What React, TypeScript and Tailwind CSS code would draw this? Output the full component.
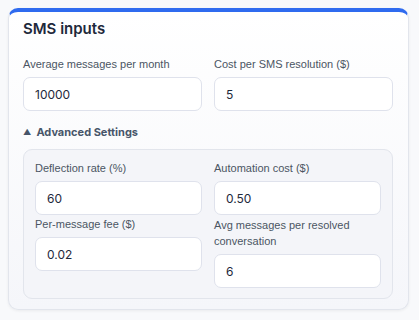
import React from "react";

const labelCls = "block text-[11px] leading-[15px] text-[#4b5563] mb-[5px]";
const inputCls =
  "w-full h-[34px] rounded-[7px] border border-[#dfe2ec] bg-white px-[11px] text-[12px] text-[#1e293b] outline-none";

function Field({ label, value, labelClass = "" }: { label: string; value: string; labelClass?: string }) {
  return (
    <div className="flex flex-col">
      <label className={labelCls + " " + labelClass} style={{ fontFamily: '"Liberation Sans", Arial, sans-serif' }}>
        {label}
      </label>
      <input className={inputCls} defaultValue={value} style={{ fontFamily: "Inter, sans-serif" }} />
    </div>
  );
}

export default function App() {
  return (
    <div className="w-[419px] h-[320px] bg-[#f8f9fb] pt-[8px] pl-[8px]" style={{ fontFamily: "Inter, sans-serif" }}>
      <div className="w-[401px] h-[302px] rounded-[10px] border border-[#e2e5ec] border-t-[4px] border-t-[#2f6bef] bg-gradient-to-b from-white to-[#f5f6fa] shadow-[0_1px_3px_rgba(0,0,0,0.06)] px-[14px] pt-[6px]">
        <h2 className="text-[15px] leading-[22px] font-semibold text-[#1e293b]">SMS inputs</h2>
        <div className="mt-[17px] grid grid-cols-2 gap-x-[12px] pr-[1px]">
          <Field label="Average messages per month" value="10000" />
          <Field label="Cost per SMS resolution ($)" value="5" />
        </div>
        <div className="mt-[13px] flex items-center gap-[5px] text-[11px] leading-[16px] font-bold text-[#475569]">
          <span className="text-[8px]">▲</span>
          <span>Advanced Settings</span>
        </div>
        <div className="mt-[9px] rounded-[9px] border border-[#e2e5ec] bg-[#f4f5f9] px-[11px] pt-[11px] pb-[10px] mr-[1px]">
          <div className="grid grid-cols-2 gap-x-[12px] gap-y-[2px]">
            <Field label="Deflection rate (%)" value="60" />
            <Field label="Automation cost ($)" value="0.50" />
            <div>
              <Field label="Per-message fee ($)" value="0.02" />
            </div>
            <Field label="Avg messages per resolved conversation" value="6" labelClass="leading-[16px] mb-[2px]" />
          </div>
        </div>
      </div>
    </div>
  );
}
